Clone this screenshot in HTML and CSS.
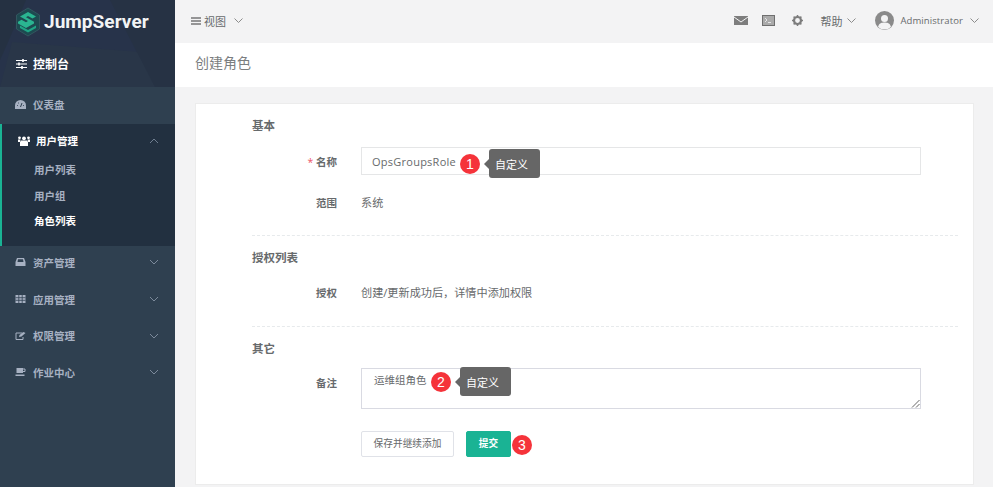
FILE: index.html
```html
<!DOCTYPE html>
<html lang="zh">
<head>
<meta charset="utf-8">
<title>创建角色</title>
<link rel="stylesheet" href="styles.css">
</head>
<body>
<div class="app">
  <aside class="sidebar">
    <div class="side-head">
      <svg class="side-bg" width="175" height="87" viewBox="0 0 175 87"><polygon points="0,0 26,0 8,42 0,60" fill="#253142"/><polygon points="12,42 140,52 155,87 0,87" fill="#293648"/><polygon points="110,0 175,0 175,87 155,87" fill="#263244"/></svg>
      <div class="logo">
        <svg width="24" height="30" viewBox="0 0 24 30"><polygon points="12,1 23.500,8 23.500,22 12,29 .5,22 .5,8" fill="#1d4a50" stroke="#33565f"/><path d="M4 9.500L12 5l8 4.500-3.500 2-4.500-2.500-2 1.200 8 4.500v1.800l-8 4.500-8-4.500v-1.800l3.500-2 4.500 2.500 2-1.200-8-4.500z" fill="#2ab591"/><path d="M4 18.500l8 4.500 8-4.500v2.500l-8 4.500-8-4.500z" fill="#1fa585"/></svg>
        <span class="logo-text">JumpServer</span>
      </div>
      <div class="console">
        <svg width="11" height="10" viewBox="0 0 11 10"><path d="M0 1.500h11M0 5h11M0 8.500h11" stroke="#fff" stroke-width="1.200"/><path d="M7 0v3M3 3.500v3M6 7v3" stroke="#fff" stroke-width="1.600"/></svg>
        <span>控制台</span>
      </div>
    </div>
    <nav class="menu">
      <a class="item item-dash">
        <svg class="ico" width="11" height="9" viewBox="0 0 11 9"><path d="M0 9V5.500a5.500 5.500 0 0 1 11 0V9z" fill="#a7b1c2"/><path d="M5.500 7L7 3" stroke="#2f4050"/><path d="M2 5.500h.8M3 3h.8M8.200 5.500h.8" stroke="#2f4050"/></svg>
        <span>仪表盘</span>
      </a>
      <div class="group">
        <a class="item item-head">
          <svg class="ico" width="12" height="10" viewBox="0 0 12 10"><path d="M3 4.500h6l1 1.500v4H2V6z" fill="#fff"/><path d="M0 3.500h2.500L2 6H0zM12 3.500H9.500L10 6h2z" fill="#fff"/><circle cx="1.500" cy="1.800" r="1.400" fill="#fff"/><circle cx="10.500" cy="1.800" r="1.400" fill="#fff"/><circle cx="6" cy="2.300" r="1.900" fill="#fff"/></svg>
          <span>用户管理</span>
          <svg class="chev" width="10" height="6" viewBox="0 0 10 6"><path d="M1 5l4-4 4 4" fill="none" stroke="#6f7e90"/></svg>
        </a>
        <a class="sub">用户列表</a>
        <a class="sub">用户组</a>
        <a class="sub sub-on">角色列表</a>
      </div>
      <a class="item item-row">
        <svg class="ico" width="10" height="8" viewBox="0 0 10 8"><path d="M1.500 0h7L10 4v4H0V4z" fill="#a7b1c2"/><path d="M2.500 1.200h5L8 4H2z" fill="#2f4050"/></svg>
        <span>资产管理</span>
        <svg class="chev" width="10" height="6" viewBox="0 0 10 6"><path d="M1 1l4 4 4-4" fill="none" stroke="#7c8a9b"/></svg>
      </a>
      <a class="item item-row">
        <svg class="ico" width="10" height="8" viewBox="0 0 10 8"><path d="M0 0h10v8H0z" fill="#a7b1c2"/><path d="M3.300 0v8M6.700 0v8M0 2.700h10M0 5.300h10" stroke="#2f4050" stroke-width=".8"/></svg>
        <span>应用管理</span>
        <svg class="chev" width="10" height="6" viewBox="0 0 10 6"><path d="M1 1l4 4 4-4" fill="none" stroke="#7c8a9b"/></svg>
      </a>
      <a class="item item-row">
        <svg class="ico" width="10" height="8" viewBox="0 0 10 8"><path d="M7 1H.5v6.500h7V5" fill="none" stroke="#a7b1c2"/><path d="M3.500 5l.5-2L8 0l2 1-4 3.500z" fill="#a7b1c2"/></svg>
        <span>权限管理</span>
        <svg class="chev" width="10" height="6" viewBox="0 0 10 6"><path d="M1 1l4 4 4-4" fill="none" stroke="#7c8a9b"/></svg>
      </a>
      <a class="item item-row">
        <svg class="ico" width="10" height="8" viewBox="0 0 10 8"><path d="M1 0h6.500v5H1z" fill="#a7b1c2"/><path d="M7 1h2.500v2.500H7" fill="none" stroke="#a7b1c2"/><path d="M0 6.500h9V8H0z" fill="#a7b1c2"/></svg>
        <span>作业中心</span>
        <svg class="chev" width="10" height="6" viewBox="0 0 10 6"><path d="M1 1l4 4 4-4" fill="none" stroke="#7c8a9b"/></svg>
      </a>
    </nav>
  </aside>
  <main class="main">
    <header class="topbar">
      <div class="view">
        <svg width="10" height="8" viewBox="0 0 10 8"><path d="M0 1h10M0 4h10M0 7h10" stroke="#777" stroke-width="1.400"/></svg>
        <span>视图</span>
        <svg class="tchev" width="9" height="5" viewBox="0 0 9 5"><path d="M.5.500l4 4 4-4" fill="none" stroke="#8b8b8b"/></svg>
      </div>
      <div class="tools">
        <svg class="t-mail" width="14" height="9" viewBox="0 0 14 9"><path d="M0 0h14v9H0z" fill="#7d7d7d"/><path d="M0 1l7 5 7-5" fill="none" stroke="#f3f3f4"/></svg>
        <svg class="t-term" width="13" height="11" viewBox="0 0 13 11"><rect x=".5" y=".5" width="12" height="10" fill="#aaa" stroke="#6f6f6f"/><path d="M3 3l2 2-2 2M6 7.500h3" fill="none" stroke="#f3f3f4" stroke-width=".8"/></svg>
        <svg class="t-gear" width="11" height="11" viewBox="0 0 11 11"><circle cx="5.500" cy="5.500" r="3.500" fill="none" stroke="#7d7d7d" stroke-width="2.200"/><path d="M5.500 0v11M0 5.500h11M1.600 1.600l7.800 7.800M9.400 1.600l-7.800 7.800" stroke="#7d7d7d" stroke-width="1.500" stroke-dasharray="2 7"/></svg>
        <span class="t-help">帮助</span>
        <svg class="t-hchev" width="9" height="5" viewBox="0 0 9 5"><path d="M.5.500l4 4 4-4" fill="none" stroke="#8b8b8b"/></svg>
        <span class="avatar">
          <svg width="19" height="19" viewBox="0 0 19 19"><circle cx="9.500" cy="9.500" r="9.500" fill="#8a8a8a"/><circle cx="9.500" cy="7.500" r="3.500" fill="#f3f3f4"/><path d="M3 16c1-4 4-4.500 6.500-4.500S15 12 16 16a9.500 9.500 0 0 1-13 0z" fill="#f3f3f4"/></svg>
        </span>
        <span class="t-user">Administrator</span>
        <svg class="t-uchev" width="9" height="5" viewBox="0 0 9 5"><path d="M.5.500l4 4 4-4" fill="none" stroke="#8b8b8b"/></svg>
      </div>
    </header>
    <div class="title-bar"><h1>创建角色</h1></div>
    <section class="content">
      <div class="card">
        <h3 class="sec sec-first">基本</h3>
        <div class="row row-name">
          <label class="lbl"><em>*</em> 名称</label>
          <div class="field">
            <div class="input">OpsGroupsRole</div>
            <span class="note note-1"><i class="num">1</i><span class="tip">自定义</span></span>
          </div>
        </div>
        <div class="row row-scope">
          <label class="lbl">范围</label>
          <div class="val">系统</div>
        </div>
        <div class="dash dash-1"></div>
        <h3 class="sec">授权列表</h3>
        <div class="row row-perm">
          <label class="lbl">授权</label>
          <div class="val">创建/更新成功后，详情中添加权限</div>
        </div>
        <div class="dash dash-2"></div>
        <h3 class="sec">其它</h3>
        <div class="row row-note">
          <label class="lbl">备注</label>
          <div class="field">
            <div class="textarea">运维组角色
              <svg class="grip" width="9" height="9" viewBox="0 0 9 9"><path d="M8.500 1L1 8.500M8.500 5L5 8.500" stroke="#555" stroke-width=".9"/></svg>
            </div>
            <span class="note note-2"><i class="num">2</i><span class="tip">自定义</span></span>
          </div>
        </div>
        <div class="row row-btns">
          <span class="lbl"></span>
          <div class="btns">
            <button class="btn btn-white">保存并继续添加</button>
            <button class="btn btn-primary">提交</button>
            <i class="num num-3">3</i>
          </div>
        </div>
      </div>
    </section>
  </main>
</div>
</body>
</html>
```
FILE: styles.css
```css
* { box-sizing: border-box; }
html, body { margin: 0; height: 100%; }
body {
  width: 993px;
  height: 487px;
  overflow: hidden;
  background: #f3f3f4;
  font-family: "Open Sans", "Noto Sans CJK SC", sans-serif;
  font-size: 11px;
  color: #676a6c;
}
.app { display: flex; height: 487px; }

.sidebar { width: 175px; flex: none; background: #2f4050; display: flex; flex-direction: column; }
.side-head { height: 87px; position: relative; background: #27334a; overflow: hidden; }
.side-bg { position: absolute; left: 0; top: 0; }
.logo { position: relative; display: flex; align-items: center; height: 43px; padding: 0 0 0 16px; gap: 4px; }
.logo-text { font-family: "Roboto", sans-serif; font-weight: 700; font-size: 19px; letter-spacing: .05px; color: #f2f4f5; }
.console { position: relative; display: flex; align-items: center; gap: 6px; height: 44px; padding: 0 0 2px 16px; color: #fff; font-size: 12px; font-weight: 600; }

.menu { display: flex; flex-direction: column; }
.item { display: flex; align-items: center; color: #a7b1c2; font-weight: 600; font-size: 10.500px; padding-left: 15px; position: relative; }
.ico { margin-right: 7px; flex: none; width: 11px; }
.chev { position: absolute; right: 16px; }
.item-dash { height: 37px; padding-bottom: 3px; background: #2f4050; }
.group { height: 122px; background: #223040; border-left: 2px solid #1ab394; }
.item-head { height: 33px; color: #fff; padding-left: 16px; }
.item-head .ico { margin-right: 6px; width: 12px; }
.sub { display: flex; align-items: center; height: 25.500px; padding-left: 32px; color: #a7b1c2; font-weight: 600; font-size: 10.500px; }
.sub-on { color: #fff; }
.item-row { height: 36.700px; top: -2px; }

.main { flex: 1; display: flex; flex-direction: column; min-width: 0; }
.topbar { height: 43px; display: flex; align-items: center; justify-content: space-between; padding: 0 0 2px 16px; background: #f3f3f4; color: #676a6c; }
.view { display: flex; align-items: center; gap: 3px; font-size: 11px; }
.tchev { margin-left: 5px; }
.tools { display: flex; align-items: center; font-size: 11px; }
.t-mail { margin-right: 14px; }
.t-term { margin-right: 17px; }
.t-gear { margin-right: 17px; }
.t-hchev { margin-left: 5px; margin-right: 19px; }
.avatar { display: flex; margin-right: 6px; }
.t-user { letter-spacing: .1px; margin-right: 7px; font-size: 9.500px; }
.t-uchev { margin-right: 14px; }

.title-bar { height: 44px; background: #fff; display: flex; align-items: center; padding: 0 0 6px 20px; }
.title-bar h1 { margin: 0; font-size: 14px; font-weight: 400; color: #7b7e80; }

.content { flex: 1; padding: 16px 19px 0 20px; }
.card { height: 382px; background: #fff; border: 1px solid #ececec; padding: 0 15px 0 56px; display: flex; flex-direction: column; }
.sec { margin: 0; font-size: 11.500px; font-weight: 600; color: #676a6c; height: 16px; line-height: 16px; }
.sec-first { margin-top: 14px; }
.row { display: flex; align-items: center; }
.lbl { width: 85px; text-align: right; font-size: 10.500px; font-weight: 600; flex: none; margin-right: 24px; color: #676a6c; }
.lbl em { color: #ed5565; font-style: normal; font-weight: 400; }
.val { font-size: 11.150px; }
.field { width: 560px; position: relative; }
.input { height: 28px; border: 1px solid #e5e6e7; padding: 0 10px; display: flex; align-items: center; font-size: 11px; letter-spacing: .25px; color: #676a6c; }
.textarea { height: 41px; border: 1px solid #d9dae2; padding: 3px 12px; font-size: 10.500px; position: relative; color: #676a6c; }
.grip { position: absolute; right: 0; bottom: 0; }
.row-name { margin-top: 13px; }
.row-scope { margin-top: 19px; height: 16px; }
.dash { border-top: 1px dashed #e7eaec; }
.dash-1 { margin-top: 25px; margin-bottom: 14px; }
.row-perm { margin-top: 18px; height: 16px; }
.dash-2 { margin-top: 26px; margin-bottom: 14px; }
.row-note { margin-top: 11px; align-items: flex-start; }
.row-note .lbl { padding-top: 7px; }
.row-btns { margin-top: 22px; }
.btns { display: flex; align-items: center; }
.btn { height: 26px; border-radius: 2px; font-family: inherit; font-size: 9.700px; border: 1px solid #e0e2e8; background: #fff; color: #676a6c; padding: 0 0 2px; }
.btn-white { width: 93px; }
.btn-primary { width: 45px; margin-left: 12px; background: #1ab394; border-color: #1ab394; color: #fff; font-weight: 600; }
.num { display: inline-flex; align-items: center; justify-content: center; width: 20px; height: 20px; border-radius: 50%; background: #f5333a; color: #fff; font-family: "Liberation Sans", sans-serif; font-style: normal; font-size: 14px; flex: none; }
.num-3 { margin: 2px 0 0 1px; }
.note { position: absolute; display: flex; align-items: center; }
.note-1 { left: 99px; top: 2px; }
.note-2 { left: 70px; top: -1px; }
.tip { position: relative; margin-left: 9px; width: 51px; height: 29px; background: #666; border-radius: 3px; color: #fff; font-size: 11px; display: flex; align-items: center; padding-left: 6px; }
.tip::before { content: ""; position: absolute; left: -5px; top: 10px; border: 5px solid transparent; border-left: 0; border-right-color: #666; }
```
